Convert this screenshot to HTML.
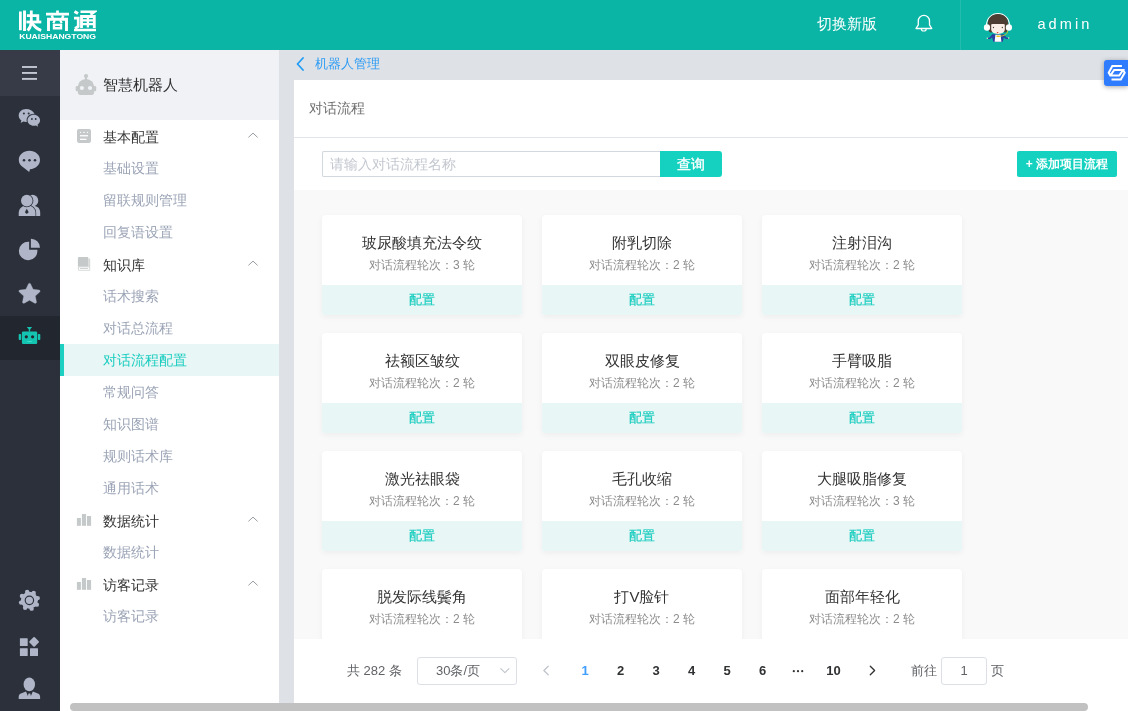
<!DOCTYPE html>
<html lang="zh">
<head>
<meta charset="utf-8">
<title>对话流程配置</title>
<style>
*{box-sizing:border-box;margin:0;padding:0}
html,body{width:1128px;height:711px;overflow:hidden;background:#fff}
body{font-family:"Liberation Sans",sans-serif;font-size:14px;color:#333;position:relative}
.abs{position:absolute}
body{filter:opacity(1)}
/* header */
#hdr{position:absolute;left:0;top:0;width:1128px;height:50px;background:#0bb5a6;color:#fff}
#logo{position:absolute;left:19px;top:10px;width:78px;height:30px}
#switch{position:absolute;left:817px;top:12px;height:24px;line-height:24px;font-size:14.6px;color:#fff;white-space:nowrap}
#bell{position:absolute;left:914px;top:13px;width:20px;height:20px}
#hdiv{position:absolute;left:960px;top:0;width:1px;height:50px;background:rgba(255,255,255,.1)}
#avatar{position:absolute;left:982px;top:10px;width:32px;height:32px}
#uname{position:absolute;left:1037.500px;top:11.500px;height:24px;line-height:24px;font-size:14.600px;letter-spacing:3px;color:#fff}
/* nav */
#nav{position:absolute;left:0;top:50px;width:60px;height:661px;background:#2b303b}
#nav .burger{position:absolute;left:0;top:0;width:60px;height:46px;background:#363b47}
#nav .act{position:absolute;left:0;top:266px;width:60px;height:44px;background:#22262e}
#nav svg{position:absolute}
/* menu */
#menu{position:absolute;left:60px;top:50px;width:219px;height:653px;background:#fff}
#menu .head{position:absolute;left:0;top:0;width:219px;height:70px;background:#f0f2f6}
#menu .head span{position:absolute;left:43px;top:24px;line-height:22px;font-size:15px;color:#333}
#menu .row{position:absolute;left:0;width:219px;height:32px;line-height:32px;padding-left:43px;font-size:14px;white-space:nowrap}
#menu .grp{color:#333;line-height:34px}
#menu .sub{color:#9ba4b6}
#menu .on{background:#e8f6f6;color:#19cdbf;border-left:4px solid #1ccfc0;padding-left:39px}
#menu .chev{position:absolute;left:188px;top:12px;width:10px;height:6px}
#menu .ico{position:absolute;left:16px}
/* main */
#strip{position:absolute;left:279px;top:50px;width:849px;height:653px;background:#dee1e6}
#crumb{position:absolute;left:294px;top:50px;width:834px;height:30px}
#crumb span{position:absolute;left:21px;top:4px;line-height:20px;font-size:13px;color:#2d9cf4}
#main{position:absolute;left:294px;top:80px;width:834px;height:623px;background:#fff;overflow:hidden}
#title{position:absolute;left:0;top:0;width:834px;height:58px;border-bottom:1px solid #e1e4ea}
#title span{position:absolute;left:15px;top:17px;line-height:22px;font-size:14px;color:#6e6e6e}
#search{position:absolute;left:28px;top:71px;width:338px;height:26px;border:1px solid #d3d7de;border-right:none;border-radius:2px 0 0 2px;background:#fff;padding-left:7px;line-height:24px;font-size:14px;color:#c3c7cf}
#qbtn{position:absolute;left:366px;top:71px;width:62px;height:26px;background:#15d2c0;color:#fff;border-radius:0 3px 3px 0;line-height:26px;text-align:center;font-size:14px;-webkit-text-stroke:.35px #fff}
#addbtn{position:absolute;left:723px;top:71px;width:100px;height:26px;background:#15d2c0;color:#fff;border-radius:2px;line-height:26px;text-align:center;font-size:12px;font-weight:bold;white-space:nowrap}
#cards{position:absolute;left:0;top:110px;width:834px;height:449px;background:#f9f9f9;overflow:hidden}
.card{position:absolute;width:200px;height:100px;background:#fff;border-radius:4px 4px 2px 2px;box-shadow:0 2px 6px rgba(0,0,0,.05);overflow:hidden;text-align:center}
.card .t{position:absolute;left:0;top:16.500px;width:200px;line-height:22px;font-size:15px;color:#333;white-space:nowrap}
.card .s{position:absolute;left:0;top:41px;width:200px;line-height:18px;font-size:12px;color:#8c8c8c;white-space:nowrap}
.card .f{position:absolute;left:0;top:70px;width:200px;height:30px;line-height:29px;background:#e9f6f6;color:#19cdbf;font-size:13px;-webkit-text-stroke:.2px #19cdbf}
/* pagination */
#pg{position:absolute;left:0;top:559px;width:834px;height:64px;background:#fff;font-size:13px;color:#606266}
#pg .x{position:absolute;top:18px;height:28px;line-height:28px;white-space:nowrap}
#pg .n{position:absolute;top:18px;height:28px;line-height:28px;width:36px;text-align:center;font-weight:bold;color:#303133}
#pg .box{position:absolute;top:18px;height:28px;border:1px solid #dcdfe6;border-radius:3px;background:#fff;line-height:26px;text-align:center}
/* scrollbar */
#hs{position:absolute;left:60px;top:703px;width:1068px;height:8px;background:#fff}
#hs i{position:absolute;left:10px;top:0;width:1018px;height:8px;border-radius:4px;background:#c1c1c1}
#float{position:absolute;left:1104px;top:60px;width:24px;height:26px;background:#2f7cff;border-radius:3px 0 0 3px;box-shadow:0 1px 5px rgba(0,0,0,.35)}
</style>
</head>
<body>
<div id="strip"></div>

<!-- HEADER -->
<div id="hdr">
  <div id="logo">
    <svg width="78" height="30" viewBox="19 10 78 30">
      <g fill="none" stroke="#fff" stroke-width="2.9" stroke-linecap="butt" stroke-linejoin="miter">
        <!-- kuai -->
        <path d="M20.300 11.600V30.300M24.500 10.600V30.900"/>
        <path d="M31.300 10.600V22M26.900 15.700H37.800V21.900" stroke-width="2.8"/>
        <path d="M26.500 22H41.300" stroke-width="2.8"/>
        <path d="M31.300 22.500C30.800 26 29.800 28.500 27.600 30.600M31.800 22.500C34 26.500 37 29 41.200 30.300" stroke-width="2.8"/>
        <!-- shang -->
        <path d="M57.500 10.600V13.500M46 14.200H69" stroke-width="2.7"/>
        <path d="M51.800 15.300L52.800 18.200M63.300 15.300L62.300 18.200" stroke-width="2.5"/>
        <path d="M48.500 30.900V19.200H66.500V30.900" stroke-width="2.9"/>
        <path d="M54.800 20.300L53.300 23.200M60.200 20.300L61.700 23.200" stroke-width="2.2"/>
        <path d="M54 24.900H61V28.200H54Z" stroke-width="2.4"/>
        <!-- tong -->
        <path d="M74.500 11.600L78 13.600" stroke-width="2.9"/>
        <path d="M74 18.200H78.200V26.500L75 28.500" stroke-width="2.7"/>
        <path d="M74 30H96" stroke-width="2.5"/>
        <path d="M80.500 11.700H94.500L90.500 14.800" stroke-width="2.6"/>
        <path d="M81.500 28V16.500H94.300V28" stroke-width="2.8"/>
        <path d="M87.900 16.500V27.500M81.500 20.300H94.300M81.500 24.200H94.300" stroke-width="2.3"/>
      </g>
      <text x="19.200" y="38.700" font-family="Liberation Sans, sans-serif" font-size="6.400" font-weight="bold" fill="#fff" textLength="76.800" lengthAdjust="spacingAndGlyphs">KUAISHANGTONG</text>
    </svg>
  </div>
  <div id="switch">切换新版</div>
  <svg id="bell" viewBox="0 0 20 20"><path d="M4.300 11.900V8A5.600 5.600 0 0 1 15.500 8V11.900L17.800 15.500H2Z" fill="none" stroke="#fff" stroke-width="1.300" stroke-linejoin="round"/><path d="M7.400 15.900A2.400 2.100 0 0 0 12.200 15.900" fill="none" stroke="#fff" stroke-width="1.200"/></svg>
  <div id="hdiv"></div>
  <svg id="avatar" viewBox="982 10 32 32">
    <path d="M986.600 25a11.400 11.400 0 0 1 22.800 0" fill="none" stroke="#fff" stroke-width="1.100"/>
    <path d="M998 14c6 0 10.200 4 10.200 9.600 0 3.300-.3 6-1.600 8.500-1.100.7-2.600.6-3.600 0l.4-8h-10.800l.4 8c-1 .6-2.500.7-3.600 0-1.300-2.500-1.600-5.200-1.600-8.500C987.800 18 992 14 998 14z" fill="#4e3d33"/>
    <path d="M991.200 24h13.600v5.200c0 2.800-3 4.700-6.800 4.700s-6.800-1.900-6.800-4.700z" fill="#fcefe8"/>
    <path d="M990.800 24.500c2.500-.9 5-1.200 7.200-1.200s4.700.3 7.200 1.200v-2.500h-14.400z" fill="#4e3d33"/>
    <ellipse cx="987" cy="27.500" rx="3.100" ry="3.300" fill="#fff"/>
    <ellipse cx="1008.900" cy="27.500" rx="3.100" ry="3.300" fill="#fff"/>
    <circle cx="993.500" cy="27.500" r=".65" fill="#4a3f3a"/><circle cx="1002.300" cy="27.500" r=".65" fill="#4a3f3a"/>
    <path d="M996.600 32l1 1.400 1-1.400z" fill="#e2483d"/>
    <path d="M994.800 34.600l-2.200-.6-3.300 3.700-2.100.3.300 1 2.600-.1 2-1.700 1.200 4.500h9.400l1.200-4.500 2 1.700 2.600.1.300-1-2.100-.3-3.300-3.700-2.200.6z" fill="#2b3f9e"/>
    <path d="M995.400 34.800h5.200l.8 6.900h-6.800z" fill="#fff"/>
    <path d="M1007.600 30.800c.3 3-3 5.300-8.600 5.500" fill="none" stroke="#d9c81f" stroke-width=".9"/>
    <rect x="996.400" y="35.500" width="3.200" height="1.400" rx=".6" fill="#f0c419"/>
    <circle cx="987.300" cy="38.200" r=".7" fill="#f3e3c8"/><circle cx="1008.700" cy="38" r=".7" fill="#f3e3c8"/>
  </svg>
  <div id="uname">admin</div>
</div>

<!-- NAV -->
<div id="nav">
  <div class="burger"></div>
  <div class="act"></div>
  <svg style="left:0;top:0" width="60" height="661" viewBox="0 50 60 661">
    <g fill="#b0b6c7">
      <!-- burger -->
      <rect x="22" y="66.050" width="15" height="1.900" fill="#c3c8d4"/><rect x="22" y="72" width="15" height="1.900" fill="#c3c8d4"/><rect x="22" y="77.950" width="15" height="1.900" fill="#c3c8d4"/>
      <!-- wechat -->
      <path transform="translate(0 .6)" d="M26.100 108.500c-4.100 0-7.400 2.900-7.400 6.500 0 2 1 3.800 2.700 5l-.8 2.500 2.800-1.500c.9.300 1.800.4 2.700.4.300 0 .500 0 .8 0-.2-.6-.3-1.200-.3-1.800 0-3.600 3.300-6.400 7.300-6.400.2 0 .5 0 .7 0C32.800 110.500 29.700 108.500 26.100 108.500z"/>
      <path d="M40.100 120.300c0-3-2.900-5.500-6.300-5.500s-6.300 2.500-6.300 5.500 2.800 5.500 6.300 5.500c.7 0 1.400-.1 2.100-.3l2.200 1.300-.6-2.100C39.100 123.700 40.100 122.100 40.100 120.300z"/>
      <g fill="#2b303b"><circle cx="23.900" cy="113.500" r="1"/><circle cx="28.700" cy="113.500" r="1"/><circle cx="31.900" cy="119" r=".9"/><circle cx="35.700" cy="119" r=".9"/></g>
      <!-- chat -->
      <path d="M29.400 150.800C23.500 150.800 18.800 154.900 18.800 160C18.800 163.300 20.800 166.200 23.800 167.800L29.200 172.100L30 169.200C35.600 168.900 40 164.900 40 160C40 154.900 35.300 150.800 29.400 150.800Z"/>
      <g fill="#2b303b"><circle cx="24" cy="160.200" r="1.250"/><circle cx="29.500" cy="160.200" r="1.250"/><circle cx="35" cy="160.200" r="1.250"/></g>
      <!-- users -->
      <path d="M40.200 216v-3.500c0-4-2.700-6.600-6.700-6.600H29v10.100z"/>
      <circle cx="32.500" cy="200.650" r="5.800"/>
      <path d="M18.700 216v-3c0-4.400 3.300-7.600 8.100-7.600h.6c4.800 0 8.100 3.200 8.100 7.600v3z" stroke="#2b303b" stroke-width="1.300" paint-order="stroke"/>
      <circle cx="26.800" cy="200.650" r="6.600" fill="#2b303b"/>
      <circle cx="26.800" cy="200.650" r="5.800"/>
      <path d="M26.800 208.800l1 1.700.9 1.800-1.900 1.800-1.900-1.800.9-1.800z" fill="#2b303b"/>
      <!-- pie -->
      <path d="M29.150 241.750V249.800H37.330A9.250 9.250 0 1 1 29.150 241.750z"/>
      <path d="M30.900 247.800V238.700A9.100 9.100 0 0 1 40 247.800z"/>
      <!-- star -->
      <path stroke="#b0b6c7" stroke-width=".3" stroke-linejoin="round" d="M29.500 283.200c.5 0 .9.300 1.100.7l2.500 5.400 5.900.7c1.100.1 1.500 1.400.7 2.100l-4.400 4 1.200 5.800c.2 1-.9 1.800-1.800 1.300l-5.200-2.900-5.200 2.900c-.9.500-2-.3-1.800-1.300l1.200-5.800-4.400-4c-.8-.7-.4-2 .7-2.100l5.900-.7 2.500-5.400C28.600 283.500 29 283.200 29.500 283.200z"/>
      <!-- gear -->
      <circle cx="29.40" cy="600.35" r="8.500"/><circle cx="27.17" cy="592.04" r="2.200"/><circle cx="33.70" cy="592.90" r="2.200"/><circle cx="37.71" cy="598.12" r="2.200"/><circle cx="36.85" cy="604.65" r="2.200"/><circle cx="31.63" cy="608.66" r="2.200"/><circle cx="25.10" cy="607.80" r="2.200"/><circle cx="21.09" cy="602.58" r="2.200"/><circle cx="21.95" cy="596.05" r="2.200"/>
      <circle cx="29.400" cy="600.350" r="4.200" fill="none" stroke="#2b303b" stroke-width="1.150"/>
      <!-- grid -->
      <rect x="19.900" y="638.200" width="7.800" height="7.700" rx=".5"/><rect x="19.900" y="648.200" width="7.800" height="7.900" rx=".5"/><rect x="30" y="648.200" width="8" height="7.900" rx=".5"/>
      <rect x="30.350" y="638.150" width="7.500" height="7.500" rx="1" transform="rotate(45 34.100 641.900)"/>
      <!-- person -->
      <ellipse cx="29.300" cy="684.400" rx="5.700" ry="6.800"/>
      <path d="M18.700 699.100v-2.300c0-1.500.8-2.600 2.200-3.200l5.100-2.200 1.900 4.600.6-2.400h1.800l.6 2.400 1.900-4.600 5.100 2.200c1.400.6 2.200 1.700 2.200 3.200v2.300z"/>
    </g>
    <!-- active robot -->
    <g fill="#14c4b1">
      <path d="M26.800 326.900h5.300l-2 2.600v2.300h-1.300v-2.300z"/>
      <rect x="21.900" y="331.600" width="15.300" height="12.300" rx="1.200"/>
      <rect x="18.700" y="334" width="2.500" height="6.100" rx=".8"/><rect x="37.800" y="334" width="2.500" height="6.100" rx=".8"/>
      <circle cx="26.300" cy="336.800" r="1.600" fill="#22262e"/><circle cx="32.600" cy="336.800" r="1.600" fill="#22262e"/>
      <rect x="27.200" y="341.100" width="4.700" height=".9" fill="#3fe3cd"/>
    </g>
  </svg>
</div>

<!-- MENU -->
<div id="menu">
  <div class="head"><span>智慧机器人</span></div>
  <svg class="abs" style="left:0;top:0" width="219" height="653" viewBox="60 50 219 653">
    <g fill="#c6c9c9">
      <!-- robot head -->
      <circle cx="86" cy="76.100" r="2.100"/><rect x="85" y="77.500" width="2" height="2.500"/>
      <path d="M77.900 87.200c0-4.500 3.600-8.100 8.100-8.100s8.100 3.600 8.100 8.100v5.500c0 1.200-1 2.200-2.200 2.200H80.100c-1.200 0-2.200-1-2.200-2.200z"/>
      <rect x="75.700" y="86" width="3" height="5.300" rx="1.200"/><rect x="93.300" y="86" width="2.900" height="5.300" rx="1.200"/>
      <circle cx="81.900" cy="88" r="2.100" fill="#f0f2f6"/><circle cx="90" cy="88" r="2.100" fill="#f0f2f6"/>
      <!-- doc -->
      <rect x="77" y="129" width="14" height="13.900" rx="1.800"/>
      <g fill="#fff"><rect x="79.900" y="131.800" width="1.200" height="1.100"/><rect x="83.300" y="131.800" width="1.500" height="1.100"/><rect x="86.900" y="131.800" width="1.200" height="1.100"/><rect x="80" y="135.100" width="8" height="1.300"/><rect x="80" y="138.700" width="6.400" height="1.300"/></g>
      <!-- book -->
      <path d="M79 257h8.300c.6 0 1 .4 1 1v8.700H77.900V258.100C77.900 257.500 78.400 257 79 257z"/>
      <path d="M88.300 258.400h.9c.6 0 1 .4 1 1v11.300H79.400c-.8 0-1.500-.7-1.500-1.500v-2.500h10.400z" fill="#d6d8d8"/>
      <rect x="78.900" y="267.400" width="10.400" height="2.400" fill="#fff"/>
      <rect x="80" y="268.100" width="8" height=".8"/>
      <!-- bars -->
      <rect x="76.900" y="518" width="4" height="7.800"/><rect x="81.900" y="514" width="4.200" height="11.800"/><rect x="87" y="516" width="4.100" height="9.800"/>
      <rect x="76.900" y="582" width="4" height="7.800"/><rect x="81.900" y="578" width="4.200" height="11.800"/><rect x="87" y="580" width="4.100" height="9.800"/>
    </g>
    <g fill="none" stroke="#9a9da3" stroke-width="1">
      <path d="M248.400 137.400l4.600-4.300 4.600 4.300"/>
      <path d="M248.400 265.400l4.600-4.300 4.600 4.300"/>
      <path d="M248.400 521.400l4.600-4.300 4.600 4.300"/>
      <path d="M248.400 585.400l4.600-4.300 4.600 4.300"/>
    </g>
  </svg>
  <div class="row grp" style="top:70px">基本配置</div>
  <div class="row sub" style="top:102px">基础设置</div>
  <div class="row sub" style="top:134px">留联规则管理</div>
  <div class="row sub" style="top:166px">回复语设置</div>
  <div class="row grp" style="top:198px">知识库</div>
  <div class="row sub" style="top:230px">话术搜索</div>
  <div class="row sub" style="top:262px">对话总流程</div>
  <div class="row sub on" style="top:294px">对话流程配置</div>
  <div class="row sub" style="top:326px">常规问答</div>
  <div class="row sub" style="top:358px">知识图谱</div>
  <div class="row sub" style="top:390px">规则话术库</div>
  <div class="row sub" style="top:422px">通用话术</div>
  <div class="row grp" style="top:454px">数据统计</div>
  <div class="row sub" style="top:486px">数据统计</div>
  <div class="row grp" style="top:518px">访客记录</div>
  <div class="row sub" style="top:550px">访客记录</div>
</div>

<!-- BREADCRUMB -->
<div id="crumb">
  <svg class="abs" style="left:1px;top:7px" width="10" height="14" viewBox="0 0 10 14"><path d="M8 1L2.500 7 8 13" fill="none" stroke="#229cf5" stroke-width="1.800" stroke-linecap="round" stroke-linejoin="round"/></svg>
  <span>机器人管理</span>
</div>

<!-- MAIN -->
<div id="main">
  <div id="title"><span>对话流程</span></div>
  <div id="search">请输入对话流程名称</div>
  <div id="qbtn">查询</div>
  <div id="addbtn">+ 添加项目流程</div>
  <div id="cards">
    <div class="card" style="left:28px;top:25px"><div class="t">玻尿酸填充法令纹</div><div class="s">对话流程轮次：3 轮</div><div class="f">配置</div></div>
    <div class="card" style="left:248px;top:25px"><div class="t">附乳切除</div><div class="s">对话流程轮次：2 轮</div><div class="f">配置</div></div>
    <div class="card" style="left:468px;top:25px"><div class="t">注射泪沟</div><div class="s">对话流程轮次：2 轮</div><div class="f">配置</div></div>
    <div class="card" style="left:28px;top:143px"><div class="t">祛额区皱纹</div><div class="s">对话流程轮次：2 轮</div><div class="f">配置</div></div>
    <div class="card" style="left:248px;top:143px"><div class="t">双眼皮修复</div><div class="s">对话流程轮次：2 轮</div><div class="f">配置</div></div>
    <div class="card" style="left:468px;top:143px"><div class="t">手臂吸脂</div><div class="s">对话流程轮次：2 轮</div><div class="f">配置</div></div>
    <div class="card" style="left:28px;top:261px"><div class="t">激光祛眼袋</div><div class="s">对话流程轮次：2 轮</div><div class="f">配置</div></div>
    <div class="card" style="left:248px;top:261px"><div class="t">毛孔收缩</div><div class="s">对话流程轮次：2 轮</div><div class="f">配置</div></div>
    <div class="card" style="left:468px;top:261px"><div class="t">大腿吸脂修复</div><div class="s">对话流程轮次：3 轮</div><div class="f">配置</div></div>
    <div class="card" style="left:28px;top:379px"><div class="t">脱发际线鬓角</div><div class="s">对话流程轮次：2 轮</div><div class="f">配置</div></div>
    <div class="card" style="left:248px;top:379px"><div class="t">打V脸针</div><div class="s">对话流程轮次：2 轮</div><div class="f">配置</div></div>
    <div class="card" style="left:468px;top:379px"><div class="t">面部年轻化</div><div class="s">对话流程轮次：2 轮</div><div class="f">配置</div></div>
  </div>
  <div id="pg">
    <div class="x" style="left:53px">共 282 条</div>
    <div class="box" style="left:123px;width:100px;padding-right:18px">30条/页</div>
    <div class="n" style="left:273px;color:#409eff">1</div>
    <div class="n" style="left:308.500px">2</div>
    <div class="n" style="left:344px">3</div>
    <div class="n" style="left:379.500px">4</div>
    <div class="n" style="left:415px">5</div>
    <div class="n" style="left:450.500px">6</div>
        <div class="n" style="left:521.500px">10</div>
    <svg class="abs" style="left:0;top:0" width="834" height="64" viewBox="294 639 834 64" fill="none" stroke-width="1.200" stroke-linecap="round" stroke-linejoin="round">
      <path d="M500.800 668.600l4.100 4.100 4.100-4.100" stroke="#c0c4cc" stroke-width="1.100"/>
      <path d="M548.200 666.200l-4.300 4.300 4.300 4.300" stroke="#c0c4cc" stroke-width="1.300"/>
      <path d="M870.300 666.200l4.300 4.300-4.300 4.300" stroke="#303133" stroke-width="1.300"/>
      <g fill="#303133" stroke="none"><circle cx="793.800" cy="671.200" r="1.100"/><circle cx="798" cy="671.200" r="1.100"/><circle cx="802.200" cy="671.200" r="1.100"/></g>
    </svg>
    <div class="x" style="left:617px">前往</div>
    <div class="box" style="left:647px;width:46px">1</div>
    <div class="x" style="left:697px">页</div>
  </div>
</div>

<div id="float"><svg class="abs" style="left:0;top:0" width="24" height="26" viewBox="1104 60 24 26"><g fill="none" stroke="#fff" stroke-width="2" stroke-linejoin="miter"><path d="M1121.900 66H1112.300L1108.700 72.800L1110.300 75.600H1119.200L1123.100 70H1114.200L1110.300 75.600"/><path d="M1111.500 79.600H1120.800L1124.700 72.800L1123.100 70"/></g></svg></div>
<div id="hs"><i></i></div>
</body>
</html>
